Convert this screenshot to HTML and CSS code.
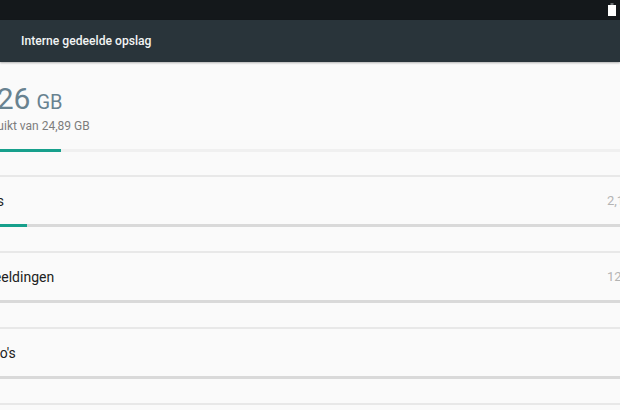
FILE: index.html
```html
<!DOCTYPE html>
<html lang="nl">
<head>
<meta charset="utf-8">
<title>Interne gedeelde opslag</title>
<link rel="stylesheet" href="styles.css">
</head>
<body>
<div class="status">
  <svg class="battery" width="8" height="13" viewBox="0 0 8 13"><path d="M2.500 0h3v2h-3z" fill="#6a6f72"/><rect x="0" y="2" width="8" height="11" fill="#fff"/></svg>
</div>
<header class="appbar">Interne gedeelde opslag</header>
<main class="content">
  <div class="scroller">
    <section class="hero">
      <div class="amount"><span class="num">2,26</span><span class="unit">GB</span></div>
      <div class="sub">Gebruikt van 24,89 GB</div>
      <div class="bar hero-bar"><div class="fill" style="width:89px"></div></div>
    </section>
    <section class="row">
      <div class="line"><span class="name">Apps</span><span class="val">2,10 GB</span></div>
      <div class="bar"><div class="fill" style="width:55px"></div></div>
    </section>
    <section class="row">
      <div class="line"><span class="name">Afbeeldingen</span><span class="val">12,00 MB</span></div>
      <div class="bar"></div>
    </section>
    <section class="row">
      <div class="line"><span class="name">Video's</span></div>
      <div class="bar"></div>
    </section>
    <section class="row"></section>
  </div>
</main>
</body>
</html>
```
FILE: styles.css
```css
html, body {
  margin: 0;
  padding: 0;
  width: 620px;
  height: 410px;
  overflow: hidden;
  background: #fafafa;
  font-family: Roboto, "Liberation Sans", sans-serif;
}
.status {
  height: 20px;
  background: #14181b;
  display: flex;
  justify-content: flex-end;
  align-items: flex-start;
  padding: 3px 4px 0 0;
  box-sizing: border-box;
}
.battery { display: block; }
.appbar {
  height: 42px;
  background: #29343a;
  color: #f2f4f4;
  font-size: 12.15px;
  font-weight: 500;
  line-height: 43px;
  padding-left: 21px;
  box-shadow: 0 1px 2px rgba(0, 0, 0, .3);
  position: relative;
}
.content {
  width: 620px;
  height: 348px;
  overflow: hidden;
}
.scroller {
  margin-left: -28px;
  width: 700px;
}
.hero {
  height: 113px;
  padding-top: 19px;
  box-sizing: border-box;
  display: flex;
  flex-direction: column;
}
.amount {
  color: #688290;
  line-height: 36px;
  height: 36px;
  white-space: nowrap;
  padding-left: 2px;
}
.num { font-size: 30px; }
.unit { font-size: 20px; margin-left: 6px; }
.sub {
  font-size: 12px;
  color: #7d7d7d;
  line-height: 16px;
  margin-top: 1px;
}
.bar {
  height: 3px;
  background: #d9d9d9;
  width: 100%;
}
.hero-bar {
  background: #f0f0f0;
  margin-top: 15px;
}
.fill {
  height: 100%;
  background: #17a08c;
}
.row {
  height: 76px;
  border-top: 2px solid #e8e8e8;
  box-sizing: border-box;
}
.line {
  display: flex;
  align-items: center;
  height: 47px;
  font-size: 14px;
}
.name { color: #212121; }
.val {
  color: #b4b4b4;
  font-size: 13px;
  margin-left: auto;
  width: 65px;
}
```
